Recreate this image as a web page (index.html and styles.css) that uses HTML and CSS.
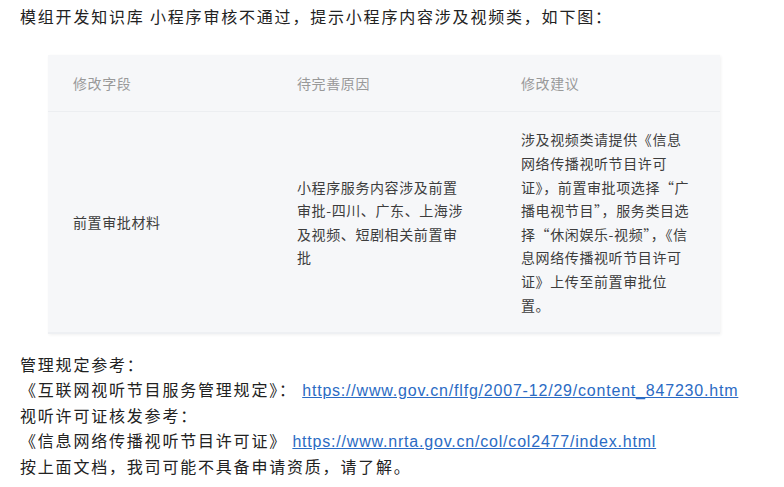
FILE: index.html
```html
<!DOCTYPE html>
<html lang="zh-CN">
<head>
  <meta charset="UTF-8">
  <meta name="viewport" content="width=device-width, initial-scale=1.0">
  <title>小程序审核不通过</title>
  <link rel="stylesheet" href="styles.css">
</head>
<body>
  <div class="doc">
    <p class="line">模组开发知识库 小程序审核不通过，提示小程序内容涉及视频类，如下图：</p>

    <div class="shot">
      <table class="review">
        <thead>
          <tr>
            <th>修改字段</th>
            <th>待完善原因</th>
            <th>修改建议</th>
          </tr>
        </thead>
        <tbody>
          <tr>
            <td>前置审批材料</td>
            <td>小程序服务内容涉及前置审批-四川、广东、上海涉及视频、短剧相关前置审批</td>
            <td>涉及视频类请提供《信息网络传播视听节目许可证》，前置审批项选择“广播电视节目”，服务类目选择“休闲娱乐-视频”，《信息网络传播视听节目许可证》上传至前置审批位置。</td>
          </tr>
        </tbody>
      </table>
    </div>

    <div class="refs">
      <p class="line">管理规定参考：</p>
      <p class="line">《互联网视听节目服务管理规定》： <a class="link" href="#">https://www.gov.cn/flfg/2007-12/29/content_847230.htm</a></p>
      <p class="line">视听许可证核发参考：</p>
      <p class="line">《信息网络传播视听节目许可证》 <a class="link" href="#">https://www.nrta.gov.cn/col/col2477/index.html</a></p>
      <p class="line">按上面文档，我司可能不具备申请资质，请了解。</p>
    </div>
  </div>
</body>
</html>
```

FILE: styles.css
```css
/* page */
body {
  margin: 0;
  background: #ffffff;
  color: #222222;
  font-family: "Noto Sans CJK SC", "Liberation Sans", sans-serif;
}

.doc {
  padding: 4px 20px;
}

.line {
  margin: 0;
  font-size: 16px;
  line-height: 25px;
  letter-spacing: 1.8px;
  white-space: nowrap;
}

.link {
  font-family: "Liberation Sans", sans-serif;
  letter-spacing: 0.8px;
  color: #2b6bc4;
  text-decoration: underline;
}

/* screenshot of the review table */
.shot {
  margin: 26px 0 0 28px;
  width: 672px;
  background: #f6f7f9;
  box-shadow: 1px 1px 3px rgba(0, 0, 0, 0.06);
}

.review {
  width: 100%;
  border-collapse: collapse;
  table-layout: fixed;
  font-size: 14px;
  letter-spacing: 0.6px;
}

.review th,
.review td {
  text-align: left;
  padding: 0 29px 0 25px;
  vertical-align: middle;
}

.review th {
  height: 56px;
  font-weight: normal;
  color: #999999;
  border-bottom: 1px solid #eceef1;
}

.review td {
  height: 221px;
  padding-top: 16px;
  padding-bottom: 14px;
  box-sizing: border-box;
  line-height: 23.6px;
  color: #3d3d3d;
  border-bottom: 2px solid #eef0f3;
}

.refs {
  margin-top: 18px;
}
```
